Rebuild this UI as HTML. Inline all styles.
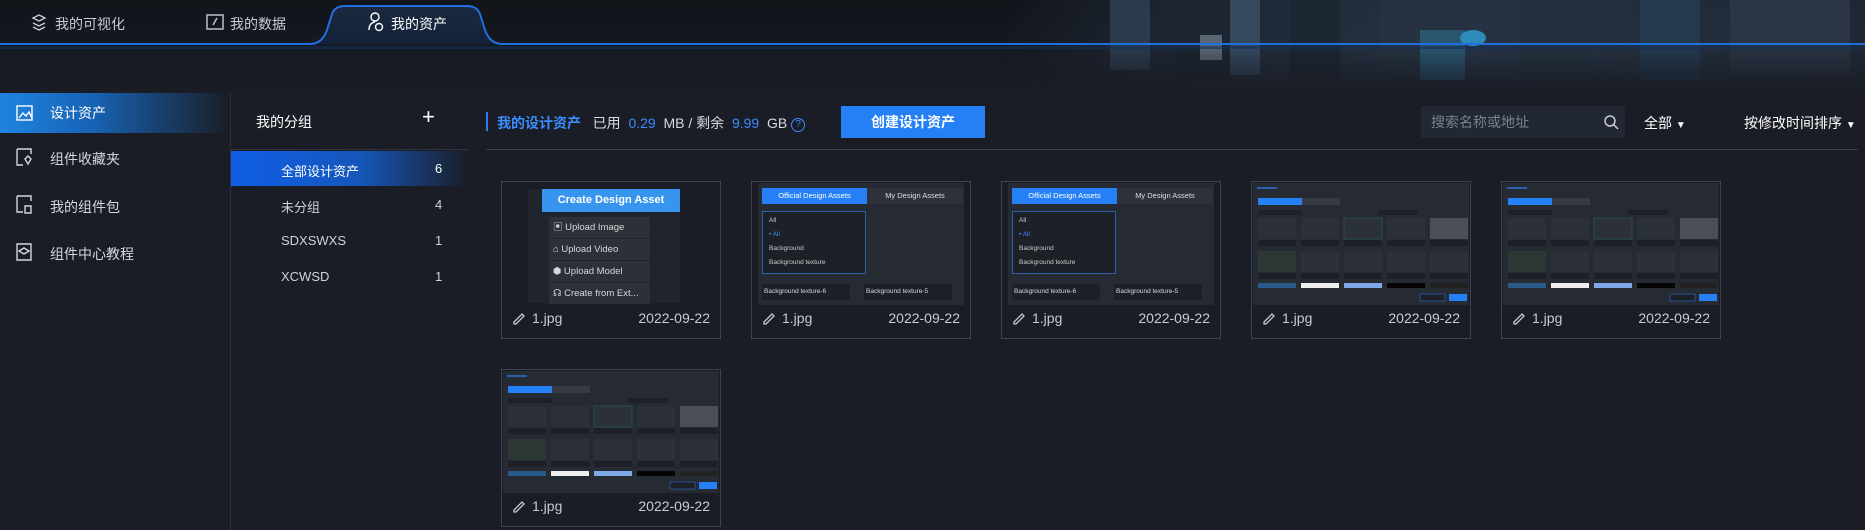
<!DOCTYPE html>
<html><head><meta charset="utf-8">
<style>
*{margin:0;padding:0;box-sizing:border-box}
body{width:1865px;height:530px;background:#1a1d25;font-family:"Liberation Sans","Noto Sans CJK SC",sans-serif;color:#d6d9de;position:relative;overflow:hidden}
.a{position:absolute}
.hdr{left:0;top:0;width:1865px;height:95px;background:linear-gradient(180deg,#111419 0%,#141820 45%,#1a1d25 100%)}
.city{left:1000px;top:0;width:865px;height:95px;background:linear-gradient(90deg,rgba(26,29,37,0) 0%,rgba(35,45,60,.7) 20%,rgba(45,60,80,.75) 55%,rgba(40,52,68,.6) 100%);-webkit-mask:linear-gradient(180deg,#000 50%,transparent 100%);mask:linear-gradient(180deg,#000 50%,transparent 100%)}
.tab{font-size:14px;color:#c9ccd2;top:14px}
.side{left:0;top:95px;width:230px;height:435px;background:#1a1d25}
.sitem{left:0;width:230px;height:40px;font-size:14px;color:#d3d6db;padding-left:50px;line-height:40px}
.grp{font-size:13px;color:#cfd2d7}
.card{width:220px;height:158px;border:1px solid #3a4253;background:#1a1d25}
.foot{left:0;top:128px;width:218px;font-size:14px;color:#c8cbd0}
.im{left:6px;top:1px;width:206px;height:122px;background:#262a33;overflow:hidden}
.pen{display:inline-block;width:14px;height:14px;vertical-align:-2px;margin-right:6px}
</style></head><body>
<div class="a hdr"></div>
<div class="a city">
 <div class="a" style="left:110px;top:0;width:40px;height:70px;background:#2b3a4c"></div>
 <div class="a" style="left:170px;top:0;width:60px;height:80px;background:#1c2530"></div>
 <div class="a" style="left:230px;top:0;width:30px;height:75px;background:#34485e"></div>
 <div class="a" style="left:200px;top:35px;width:22px;height:25px;background:#5a6673"></div>
 <div class="a" style="left:290px;top:0;width:50px;height:80px;background:#1d2633"></div>
 <div class="a" style="left:380px;top:0;width:60px;height:60px;background:#26323f"></div>
 <div class="a" style="left:420px;top:30px;width:45px;height:50px;background:#2a5670"></div>
 <div class="a" style="left:460px;top:30px;width:26px;height:16px;border-radius:50%;background:#2f8cb8"></div>
 <div class="a" style="left:520px;top:0;width:70px;height:80px;background:#23303f"></div>
 <div class="a" style="left:640px;top:0;width:60px;height:80px;background:#24384e"></div>
 <div class="a" style="left:730px;top:0;width:120px;height:75px;background:#2a3444"></div>
</div>
<svg class="a" style="left:0;top:0" width="1865" height="60">
 <defs><linearGradient id="tg" x1="0" y1="0" x2="0" y2="1"><stop offset="0" stop-color="#1b2a40"/><stop offset="1" stop-color="#13203a"/></linearGradient></defs>
 <path d="M310 44 Q322 44 327 30 L332 14 Q335 6 345 6 L467 6 Q477 6 480 14 L485 30 Q490 44 502 44 Z" fill="url(#tg)"/>
 <path d="M0 44 L310 44 Q322 44 327 30 L332 14 Q335 6 345 6 L467 6 Q477 6 480 14 L485 30 Q490 44 502 44 L1865 44" fill="none" stroke="#1f6fe0" stroke-width="2"/>
 <rect x="0" y="46" width="1865" height="3" fill="#143055" opacity=".6"/>
 <g stroke="#c9ccd2" fill="none" stroke-width="1.4">
  <path d="M33 18 l6 -3 l6 3 l-6 3z M33 23 l6 3 l6 -3 M33 27 l6 3 l6 -3"/>
  <rect x="207" y="15" width="16" height="14"/><path d="M213 25 l4 -7"/>
  <circle cx="375" cy="17" r="4" stroke="#fff"/><path d="M369 30 q0 -7 6 -8" stroke="#fff"/><circle cx="379" cy="27" r="3.5" stroke="#fff"/>
 </g>
</svg>
<div class="a tab" style="left:55px">我的可视化</div>
<div class="a tab" style="left:230px">我的数据</div>
<div class="a tab" style="left:391px;color:#fff">我的资产</div>

<div class="a side"></div>
<div class="a" style="left:230px;top:93px;width:1px;height:437px;background:#2b303b"></div>
<div class="a sitem" style="top:93px;background:linear-gradient(90deg,#1f84e0 0%,#1763b5 40%,rgba(26,29,37,0.2) 100%);color:#fff">设计资产</div>
<div class="a sitem" style="top:139px">组件收藏夹</div>
<div class="a sitem" style="top:187px">我的组件包</div>
<div class="a sitem" style="top:234px">组件中心教程</div>
<svg class="a" style="left:0;top:93px" width="40" height="180" fill="none" stroke="#d3d6db" stroke-width="1.4">
 <rect x="17" y="13" width="15" height="14" stroke="#fff"/><path d="M19 25 l4 -5 l3 3 l3 -4 l3 6" stroke="#fff"/>
 <path d="M17 56 h14 v5 M17 56 v16 h6 M25 66 l3 -3 l3 3 l-3 5z"/>
 <path d="M17 103 h14 v5 M17 103 v16 h6 M25 113 h6 v7 h-6z"/>
 <path d="M17 151 h14 v16 h-14z M19 158 l5 -3 l5 3 l-5 3z"/>
</svg>

<div class="a" style="left:256px;top:112px;font-size:14px;color:#fff">我的分组</div>
<div class="a" style="left:422px;top:104px;font-size:22px;color:#fff;font-weight:300">+</div>
<div class="a" style="left:231px;top:149px;width:237px;height:1px;background:#2e3340"></div>
<div class="a" style="left:231px;top:151px;width:237px;height:35px;background:linear-gradient(90deg,#0f5fe8 0%,#1656b8 55%,rgba(26,29,37,.4) 100%)"></div>
<div class="a grp" style="left:281px;top:161px;color:#fff">全部设计资产</div><div class="a grp" style="left:435px;top:161px;color:#fff">6</div>
<div class="a grp" style="left:281px;top:197px">未分组</div><div class="a grp" style="left:435px;top:197px">4</div>
<div class="a grp" style="left:281px;top:233px">SDXSWXS</div><div class="a grp" style="left:435px;top:233px">1</div>
<div class="a grp" style="left:281px;top:269px">XCWSD</div><div class="a grp" style="left:435px;top:269px">1</div>

<div class="a" style="left:486px;top:112px;width:2px;height:19px;background:#2b7ff5"></div>
<div class="a" style="left:497px;top:113px;font-size:14px;white-space:nowrap"><span style="color:#3b8cff;font-weight:bold">我的设计资产</span>&nbsp;&nbsp; 已用 &nbsp;<span style="color:#3b8cff">0.29</span>&nbsp; MB / 剩余 &nbsp;<span style="color:#3b8cff">9.99</span>&nbsp; GB <span style="display:inline-block;width:14px;height:14px;border:1.5px solid #3b8cff;border-radius:50%;color:#3b8cff;font-size:10px;text-align:center;line-height:11px;vertical-align:1px">?</span></div>
<div class="a" style="left:841px;top:106px;width:144px;height:32px;background:#2680f5;color:#fff;font-size:14px;font-weight:bold;text-align:center;line-height:32px">创建设计资产</div>
<div class="a" style="left:1421px;top:106px;width:204px;height:32px;background:#222833;color:#7b818b;font-size:14px;line-height:32px;padding-left:10px">搜索名称或地址</div>
<svg class="a" style="left:1603px;top:114px" width="16" height="16" fill="none" stroke="#c9ccd2" stroke-width="1.5"><circle cx="7" cy="7" r="5"/><path d="M11 11 l4 4"/></svg>
<div class="a" style="left:1644px;top:113px;font-size:14px;color:#fff">全部 <span style="font-size:10px">▼</span></div>
<div class="a" style="left:1744px;top:113px;font-size:14px;color:#fff;white-space:nowrap">按修改时间排序 <span style="font-size:10px">▼</span></div>
<div class="a" style="left:486px;top:149px;width:1372px;height:1px;background:#3a3f4a"></div>

<svg width="0" height="0" style="position:absolute">
 <defs>
  <g id="pen" fill="none" stroke="#c8cbd0" stroke-width="1.3"><path d="M2 11 L10 3 L12 5 L4 13 L2 13 Z"/><path d="M1 15.5 H14"/></g>
  <g id="dlg">
   <rect width="216" height="122" fill="#262a32"/>
   <rect x="4" y="4" width="20" height="2" fill="#2c5fa8"/>
   <rect x="5" y="15" width="44" height="7" fill="#2680f5"/><rect x="49" y="15" width="38" height="7" fill="#363a42"/>
   <rect x="5" y="27" width="44" height="5" fill="#1d2027"/><rect x="125" y="27" width="40" height="5" fill="#1d2027"/>
   <g fill="#2c3038"><rect x="5" y="35" width="38" height="21"/><rect x="48" y="35" width="38" height="21"/><rect x="91" y="35" width="38" height="21" stroke="#245050"/><rect x="134" y="35" width="38" height="21"/><rect x="177" y="35" width="38" height="21" fill="#4a4e56"/>
   <rect x="5" y="68" width="38" height="21" fill="#2d3836"/><rect x="48" y="68" width="38" height="21"/><rect x="91" y="68" width="38" height="21"/><rect x="134" y="68" width="38" height="21"/><rect x="177" y="68" width="38" height="21"/></g>
   <g fill="#1d2027"><rect x="5" y="57" width="38" height="6"/><rect x="48" y="57" width="38" height="6"/><rect x="91" y="57" width="38" height="6"/><rect x="134" y="57" width="38" height="6"/><rect x="177" y="57" width="38" height="6"/>
   <rect x="5" y="90" width="38" height="6"/><rect x="48" y="90" width="38" height="6"/><rect x="91" y="90" width="38" height="6"/><rect x="134" y="90" width="38" height="6"/><rect x="177" y="90" width="38" height="6"/></g>
   <rect x="5" y="100" width="38" height="5" fill="#2a5a8a"/><rect x="48" y="100" width="38" height="5" fill="#eee"/><rect x="91" y="100" width="38" height="5" fill="#7fa8e8"/><rect x="134" y="100" width="38" height="5" fill="#050505"/><rect x="177" y="100" width="38" height="5" fill="#222"/>
   <rect x="167" y="111" width="25" height="7" fill="#1d2027" stroke="#2680f5" stroke-width=".5"/><rect x="196" y="111" width="18" height="7" fill="#2680f5"/>
  </g>
 </defs>
</svg>

<!-- card 1 -->
<div class="a card" style="left:501px;top:181px">
 <div class="a" style="left:26px;top:7px;width:152px;height:114px;background:#20242c"></div>
 <div class="a" style="left:40px;top:7px;width:138px;height:23px;background:#3795f0;color:#fff;font-size:11px;font-weight:bold;text-align:center;line-height:23px">Create Design Asset</div>
 <div class="a" style="left:47px;top:35px;width:101px;font-size:9.5px;color:#d8d8d8">
  <div style="background:#2c3038;height:21px;line-height:21px;margin-bottom:1px;padding-left:4px">▣ Upload Image</div>
  <div style="background:#2c3038;height:21px;line-height:21px;margin-bottom:1px;padding-left:4px">⌂ Upload Video</div>
  <div style="background:#2c3038;height:21px;line-height:21px;margin-bottom:1px;padding-left:4px">⬢ Upload Model</div>
  <div style="background:#2c3038;height:21px;line-height:21px;padding-left:4px">☊ Create from Ext...</div>
 </div>
 <div class="a foot"><span style="margin-left:10px"><svg class="pen"><use href="#pen"/></svg>1.jpg</span><span style="float:right;margin-right:10px">2022-09-22</span></div>
</div>
<div class="a card" style="left:751px;top:181px"><div class="a im">
 <div class="a" style="left:4px;top:5px;width:105px;height:16px;background:#2680f5;color:#fff;font-size:7.5px;text-align:center;line-height:16px">Official Design Assets</div>
 <div class="a" style="left:109px;top:5px;width:96px;height:16px;background:#2e323a;color:#ddd;font-size:7.5px;text-align:center;line-height:16px">My Design Assets</div>
 <div class="a" style="left:4px;top:28px;width:104px;height:63px;border:1px solid #2c5fa8;background:#1d2027;font-size:6.5px;color:#ccc;padding:2px 6px;line-height:14px">All<br><span style="color:#3b8cff">• All</span><br>Background<br>Background texture</div>
 <div class="a" style="left:4px;top:101px;width:88px;height:16px;background:#1d2027;font-size:6.5px;line-height:16px;padding-left:2px">Background texture-6</div>
 <div class="a" style="left:106px;top:101px;width:88px;height:16px;background:#1d2027;font-size:6.5px;line-height:16px;padding-left:2px">Background texture-5</div>
</div><div class="a foot"><span style="margin-left:10px"><svg class="pen"><use href="#pen"/></svg>1.jpg</span><span style="float:right;margin-right:10px">2022-09-22</span></div></div>
<div class="a card" style="left:1001px;top:181px"><div class="a im">
 <div class="a" style="left:4px;top:5px;width:105px;height:16px;background:#2680f5;color:#fff;font-size:7.5px;text-align:center;line-height:16px">Official Design Assets</div>
 <div class="a" style="left:109px;top:5px;width:96px;height:16px;background:#2e323a;color:#ddd;font-size:7.5px;text-align:center;line-height:16px">My Design Assets</div>
 <div class="a" style="left:4px;top:28px;width:104px;height:63px;border:1px solid #2c5fa8;background:#1d2027;font-size:6.5px;color:#ccc;padding:2px 6px;line-height:14px">All<br><span style="color:#3b8cff">• All</span><br>Background<br>Background texture</div>
 <div class="a" style="left:4px;top:101px;width:88px;height:16px;background:#1d2027;font-size:6.5px;line-height:16px;padding-left:2px">Background texture-6</div>
 <div class="a" style="left:106px;top:101px;width:88px;height:16px;background:#1d2027;font-size:6.5px;line-height:16px;padding-left:2px">Background texture-5</div>
</div><div class="a foot"><span style="margin-left:10px"><svg class="pen"><use href="#pen"/></svg>1.jpg</span><span style="float:right;margin-right:10px">2022-09-22</span></div></div>

<div class="a card" style="left:1251px;top:181px"><svg class="a" style="left:1px;top:1px" width="216" height="122"><use href="#dlg"/></svg><div class="a foot"><span style="margin-left:10px"><svg class="pen"><use href="#pen"/></svg>1.jpg</span><span style="float:right;margin-right:10px">2022-09-22</span></div></div>
<div class="a card" style="left:1501px;top:181px"><svg class="a" style="left:1px;top:1px" width="216" height="122"><use href="#dlg"/></svg><div class="a foot"><span style="margin-left:10px"><svg class="pen"><use href="#pen"/></svg>1.jpg</span><span style="float:right;margin-right:10px">2022-09-22</span></div></div>
<div class="a card" style="left:501px;top:369px"><svg class="a" style="left:1px;top:1px" width="216" height="122"><use href="#dlg"/></svg><div class="a foot"><span style="margin-left:10px"><svg class="pen"><use href="#pen"/></svg>1.jpg</span><span style="float:right;margin-right:10px">2022-09-22</span></div></div>
</body></html>
